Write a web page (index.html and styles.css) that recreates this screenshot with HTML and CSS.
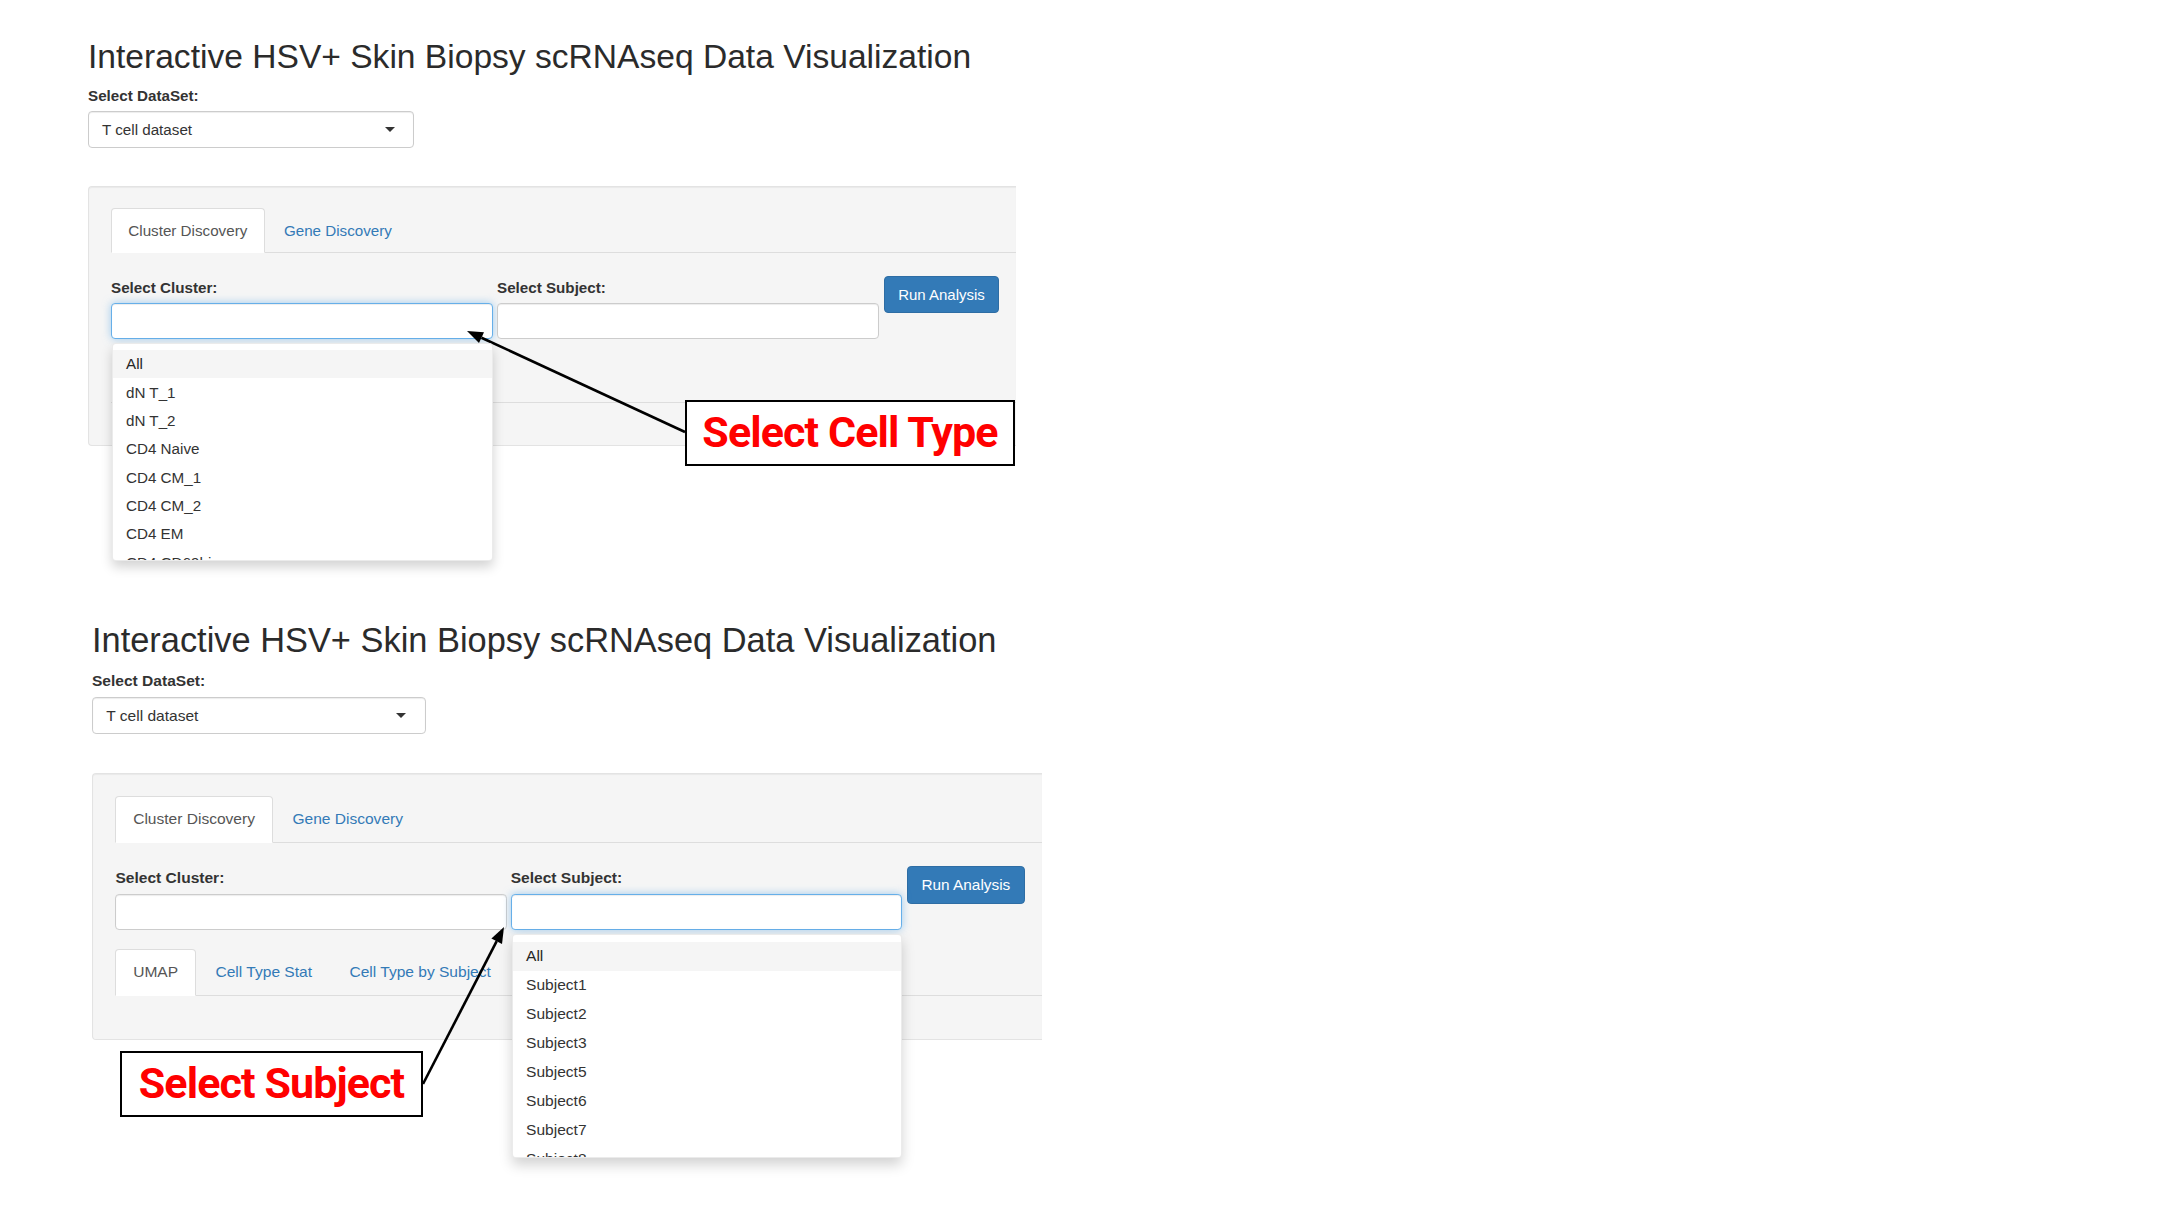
FILE: index.html
```html
<!DOCTYPE html>
<html lang="en">
<head>
<meta charset="utf-8">
<title>Interactive HSV+ Skin Biopsy scRNAseq Data Visualization</title>
<link rel="stylesheet" href="styles.css">
</head>
<body>
<main class="slide">
  <section class="shot shot--top">
    <h2 class="app-title">Interactive HSV+ Skin Biopsy scRNAseq Data Visualization</h2>
    <div class="form-group form-group--dataset">
      <label class="control-label">Select DataSet:</label>
      <div class="selectize-control">
        <div class="selectize-input has-caret">T cell dataset</div>
      </div>
    </div>
    <div class="well">
      <ul class="nav-tabs">
        <li class="active"><a>Cluster Discovery</a></li>
        <li><a class="link">Gene Discovery</a></li>
      </ul>
      <div class="tab-content">
        <div class="controls-row">
          <div class="form-group col-input">
            <label class="control-label">Select Cluster:</label>
            <div class="selectize-control">
              <div class="selectize-input focus"></div>
              <div class="selectize-dropdown">
                <div class="option active">All</div>
                <div class="option">dN T_1</div>
                <div class="option">dN T_2</div>
                <div class="option">CD4 Naive</div>
                <div class="option">CD4 CM_1</div>
                <div class="option">CD4 CM_2</div>
                <div class="option">CD4 EM</div>
                <div class="option">CD4 CD69hi</div>
              </div>
            </div>
          </div>
          <div class="form-group col-input">
            <label class="control-label">Select Subject:</label>
            <div class="selectize-control">
              <div class="selectize-input"></div>
            </div>
          </div>
          <button class="btn-primary">Run Analysis</button>
        </div>
        <ul class="nav-tabs nav-tabs--inner nav-tabs--covered">
          <li class="active"><a>UMAP</a></li>
          <li><a class="link">Cell Type Stat</a></li>
          <li><a class="link">Cell Type by Subject</a></li>
        </ul>
        <div class="inner-content"></div>
      </div>
    </div>
  </section>

  <section class="shot shot--bottom">
    <h2 class="app-title">Interactive HSV+ Skin Biopsy scRNAseq Data Visualization</h2>
    <div class="form-group form-group--dataset">
      <label class="control-label">Select DataSet:</label>
      <div class="selectize-control">
        <div class="selectize-input has-caret">T cell dataset</div>
      </div>
    </div>
    <div class="well">
      <ul class="nav-tabs">
        <li class="active"><a>Cluster Discovery</a></li>
        <li><a class="link">Gene Discovery</a></li>
      </ul>
      <div class="tab-content">
        <div class="controls-row">
          <div class="form-group col-input">
            <label class="control-label">Select Cluster:</label>
            <div class="selectize-control">
              <div class="selectize-input"></div>
            </div>
          </div>
          <div class="form-group col-input">
            <label class="control-label">Select Subject:</label>
            <div class="selectize-control">
              <div class="selectize-input focus"></div>
              <div class="selectize-dropdown">
                <div class="option active">All</div>
                <div class="option">Subject1</div>
                <div class="option">Subject2</div>
                <div class="option">Subject3</div>
                <div class="option">Subject5</div>
                <div class="option">Subject6</div>
                <div class="option">Subject7</div>
                <div class="option">Subject8</div>
              </div>
            </div>
          </div>
          <button class="btn-primary">Run Analysis</button>
        </div>
        <ul class="nav-tabs nav-tabs--inner">
          <li class="active"><a>UMAP</a></li>
          <li><a class="link">Cell Type Stat</a></li>
          <li><a class="link">Cell Type by Subject</a></li>
        </ul>
        <div class="inner-content"></div>
      </div>
    </div>
  </section>

  <div class="callout callout--cell">Select Cell Type</div>
  <div class="callout callout--subject">Select Subject</div>

  <svg class="arrows" width="2160" height="1215" viewBox="0 0 2160 1215" aria-hidden="true">
    <line x1="685" y1="432" x2="481.5" y2="337.7" stroke="#000" stroke-width="2.6"/>
    <polygon points="467,331 484,332.3 479,343.1" fill="#000"/>
    <line x1="423" y1="1084" x2="496.7" y2="941.2" stroke="#000" stroke-width="2.6"/>
    <polygon points="504,927 502,944 491.4,938.5" fill="#000"/>
  </svg>
</main>
</body>
</html>
```

FILE: styles.css
```css
html, body {
  margin: 0;
  padding: 0;
  background: #ffffff;
}

.slide {
  position: relative;
  width: 2160px;
  height: 1215px;
  padding-top: 38px;
  box-sizing: border-box;
  overflow: hidden;
  font-family: "Liberation Sans", Arial, sans-serif;
  color: #333333;
}

.shot {
  width: 928px;
  font-size: 15.2px;
  line-height: 21.7px;
}

.shot--top {
  margin-left: 88px;
}

.shot--bottom {
  zoom: 1.024;
  margin-left: 89.8px;
  margin-top: 172px;
}

.app-title {
  margin: 0 0 10px 0;
  font-size: 33.6px;
  line-height: 37px;
  font-weight: 400;
  color: #2b2b2b;
  white-space: nowrap;
}

.control-label {
  display: block;
  font-weight: 700;
  font-size: 15.2px;
  line-height: 21.7px;
  margin-bottom: 4px;
}

.form-group--dataset {
  width: 326px;
  margin-bottom: 38px;
}

.form-group--dataset .selectize-input {
  height: 37px;
}

.selectize-control {
  position: relative;
}

.selectize-input {
  box-sizing: border-box;
  height: 36px;
  padding: 7px 13px;
  line-height: 22px;
  background: #ffffff;
  border: 1px solid #cccccc;
  border-radius: 4px;
  box-shadow: inset 0 1px 1px rgba(0, 0, 0, 0.075);
  color: #333333;
}

.selectize-input.focus {
  border-color: #66afe9;
  box-shadow: inset 0 1px 1px rgba(0, 0, 0, 0.075), 0 0 8px rgba(102, 175, 233, 0.6);
}

.has-caret {
  position: relative;
}

.has-caret::after {
  content: "";
  position: absolute;
  right: 18px;
  top: 50%;
  margin-top: -2px;
  border-style: solid;
  border-width: 5.5px 5px 0 5px;
  border-color: #333333 transparent transparent transparent;
}

.selectize-dropdown {
  position: absolute;
  z-index: 10;
  top: calc(100% + 4px);
  left: 1px;
  right: 0;
  height: 218px;
  box-sizing: border-box;
  padding-top: 6px;
  overflow: hidden;
  background: #ffffff;
  border: 1px solid rgba(0, 0, 0, 0.08);
  border-radius: 4px;
  box-shadow: 0 6px 12px rgba(0, 0, 0, 0.175);
}

.option {
  padding: 3.3px 13px;
  line-height: 21.7px;
  color: #333333;
  white-space: nowrap;
}

.option.active {
  background: #f5f5f5;
  color: #262626;
}

.well {
  box-sizing: border-box;
  background: #f5f5f5;
  border: 1px solid #e3e3e3;
  border-right: none;
  border-radius: 4px 0 0 4px;
  box-shadow: inset 0 1px 1px rgba(0, 0, 0, 0.05);
  padding: 21px 0 21px 22px;
}

.nav-tabs {
  display: flex;
  list-style: none;
  margin: 0;
  padding: 0;
  border-bottom: 1px solid #dddddd;
}

.nav-tabs li {
  margin-bottom: -1px;
}

.nav-tabs--covered li {
  visibility: hidden;
}

.nav-tabs a {
  display: block;
  margin-right: 2px;
  padding: 11.2px 16.3px 10.9px;
  line-height: 21.7px;
  border: 1px solid transparent;
  border-radius: 4px 4px 0 0;
  color: #555555;
}

.nav-tabs a.link {
  color: #337ab7;
}

.nav-tabs li.active a {
  background: #ffffff;
  border-color: #dddddd #dddddd transparent #dddddd;
  color: #555555;
}

.controls-row {
  display: flex;
  align-items: flex-start;
  gap: 4px;
  margin-top: 24px;
  margin-bottom: 18px;
}

.col-input {
  width: 382px;
}

.btn-primary {
  margin-top: -1px;
  margin-left: 1px;
  width: 115px;
  height: 37px;
  padding: 0;
  font-family: "Liberation Sans", Arial, sans-serif;
  font-size: 15px;
  color: #ffffff;
  background: #337ab7;
  border: 1px solid #2e6da4;
  border-radius: 4px;
}

.inner-content {
  height: 21px;
}

.callout {
  position: absolute;
  box-sizing: border-box;
  height: 66px;
  border: 2px solid #000000;
  background: #ffffff;
  display: flex;
  align-items: center;
  justify-content: center;
  font-family: Roboto, "Liberation Sans", sans-serif;
  font-weight: 700;
  font-size: 43px;
  letter-spacing: -0.9px;
  color: #ff0000;
  padding-bottom: 2px;
}

.callout--cell {
  left: 685px;
  top: 400px;
  width: 330px;
}

.callout--subject {
  left: 120px;
  top: 1051px;
  width: 303px;
}

.arrows {
  position: absolute;
  left: 0;
  top: 0;
  pointer-events: none;
}
```
